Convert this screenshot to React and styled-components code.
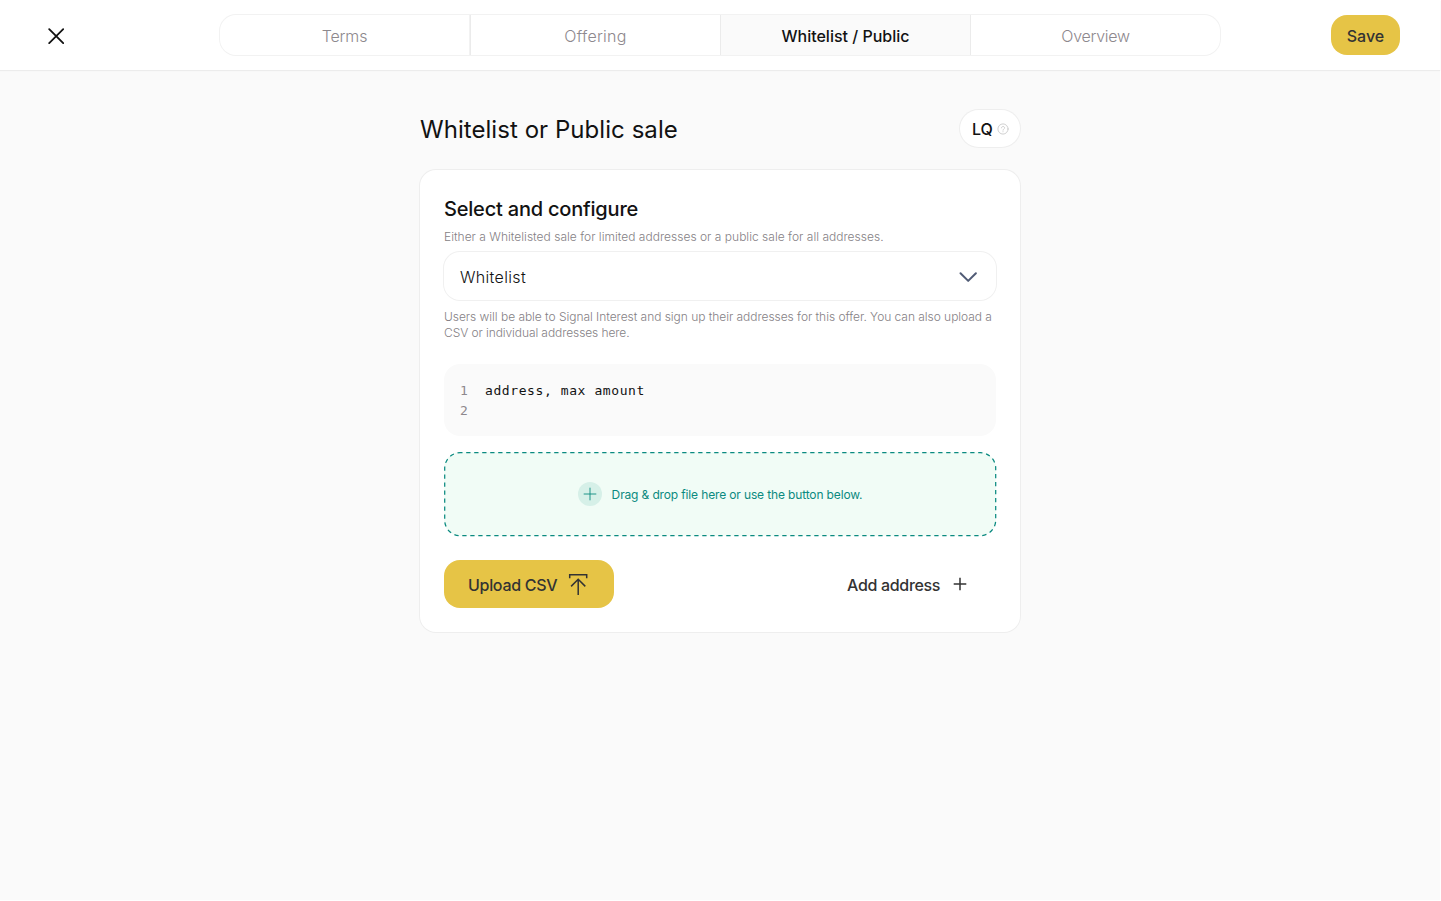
import React from "react";
import styled, { createGlobalStyle } from "styled-components";

const Global = createGlobalStyle`
  * { box-sizing: border-box; }
  body { margin: 0; background: #fff; font-family: Inter, "Liberation Sans", sans-serif; color: #121212; }
  button { font: inherit; color: inherit; border: 0; background: none; padding: 0; }
  svg { display: block; flex: none; }
`;

const Page = styled.div`
  width: 1440px;
  height: 900px;
  background: #fafafa;
`;

const Header = styled.header`
  height: 70px;
  padding: 0 40px;
  display: flex;
  align-items: center;
  justify-content: space-between;
  background: #fff;
  box-shadow: 0 1px 1px #ececec;
`;

const HeaderSide = styled.div`
  width: 180px;
  display: flex;
  justify-content: ${(p) => (p.$end ? "flex-end" : "flex-start")};
`;

const IconButton = styled.button`
  width: 32px;
  height: 32px;
  padding-top: 1px;
  display: flex;
  align-items: center;
  justify-content: center;
`;

const Tabs = styled.nav`
  display: flex;
  width: 1000px;
  height: 40px;
  border-radius: 16px;
  box-shadow: 0 0 0 1px #f2f2f2;
`;

const Tab = styled.a`
  flex: 1;
  display: flex;
  align-items: center;
  justify-content: center;
  padding-top: 1px;
  font-size: 16px;
  font-weight: ${(p) => (p.$active ? 500 : 300)};
  color: ${(p) => (p.$active ? "#121212" : "#8d888d")};
  background: ${(p) => (p.$active ? "#fafafa" : "transparent")};
  & + & { border-left: 1px solid #ebebeb; }
  &:first-child { border-right: 1px solid #f2f2f2; }
`;

const Label = styled.span`
  letter-spacing: ${(p) => p.$track || 0}px;
`;

const SaveButton = styled.button`
  width: 69px;
  height: 40px;
  padding-top: 1px;
  border-radius: 16px;
  background: #e6c446;
  color: #333;
  font-size: 16px;
  font-weight: 500;
`;

const Main = styled.main`
  width: 600px;
  margin: 0 auto;
  padding-top: 40px;
`;

const TitleRow = styled.div`
  height: 37px;
  display: flex;
  align-items: center;
  justify-content: space-between;
`;

const Title = styled.h1`
  margin: 0;
  padding-top: 1px;
  font-size: 24px;
  font-weight: 400;
`;

const Pill = styled.div`
  width: 60px;
  height: 37px;
  padding: 0 11px 0 12px;
  border-radius: 19px;
  display: flex;
  align-items: center;
  justify-content: space-between;
  background: #fff;
  box-shadow: 0 0 0 1px #eee;
  font-size: 16px;
  font-weight: 500;
`;

const Card = styled.section`
  margin-top: 23px;
  height: 462px;
  padding: 24px;
  border-radius: 16px;
  background: #fff;
  box-shadow: 0 0 0 1px #eeeeee;
`;

const Heading = styled.h2`
  margin: 0;
  line-height: 30px;
  font-size: 20px;
  font-weight: 500;
`;

const Hint = styled.p`
  margin: 0;
  padding-top: ${(p) => p.$top}px;
  font-size: 12px;
  font-weight: 300;
  line-height: 16px;
  color: #857f85;
  white-space: nowrap;
`;

const Select = styled.div`
  margin-top: 7px;
  height: 48px;
  padding: 2px 18px 0 16px;
  border-radius: 16px;
  box-shadow: 0 0 0 1px #f0f0f0;
  display: flex;
  align-items: center;
  justify-content: space-between;
  font-size: 16px;
  font-weight: 300;
`;

const Code = styled.div`
  margin-top: 23px;
  height: 72px;
  padding: 17px 16px;
  border-radius: 16px;
  background: #fafafa;
  font-family: "DejaVu Sans Mono", monospace;
  font-size: 13px;
  letter-spacing: 0.59px;
  line-height: 20px;
`;

const CodeLine = styled.div`
  display: flex;
  height: 20px;
`;

const LineNumber = styled.span`
  width: 25px;
  color: #8d888d;
`;

const DropZone = styled.div`
  position: relative;
  margin-top: 16px;
  height: 84px;
  border-radius: 16px;
  background: #f1fcf6;
  display: flex;
  align-items: center;
  justify-content: center;
  gap: 10px;
  color: #0b8a80;
  font-size: 12px;
`;

const DashedOutline = styled.svg`
  position: absolute;
  inset: 0;
  width: 100%;
  height: 100%;
  overflow: visible;
`;

const PlusBadge = styled.span`
  width: 24px;
  height: 24px;
  border-radius: 50%;
  background: #d6f0e8;
  display: flex;
  align-items: center;
  justify-content: center;
`;

const Actions = styled.div`
  margin-top: 24px;
  padding-right: 5px;
  display: flex;
  justify-content: space-between;
`;

const ActionButton = styled.button`
  height: 48px;
  padding: 1px 24px 0;
  border-radius: 16px;
  display: flex;
  align-items: center;
  justify-content: space-between;
  width: ${(p) => p.$width}px;
  background: ${(p) => (p.$primary ? "#e6c446" : "transparent")};
  color: #333;
  font-size: 16px;
  font-weight: 500;
  svg { margin-bottom: 2px; }
`;

const Close = () => (
  <svg width="16" height="16" viewBox="0 0 16 16" fill="none" stroke="#121212" strokeWidth="1.8" strokeLinecap="round">
    <path d="M1.200 1.200l14 14M15.200 1.200L1.200 15.200" />
  </svg>
);

const Chevron = () => (
  <svg width="20" height="12" viewBox="0 0 20 12" fill="none" stroke="#505b75" strokeWidth="2" strokeLinecap="round" strokeLinejoin="round">
    <path d="M2.500 2.200l7.700 7.700 7.700-7.700" />
  </svg>
);

const Help = () => (
  <svg width="12" height="12" viewBox="0 0 12 12" fill="none" stroke="#c4c4c4" strokeWidth="0.8" strokeLinecap="round">
    <circle cx="6" cy="6" r="5.100" />
    <path d="M4.400 4.900c0-2 3.200-2 3.200 0C7.600 6 6 6 6 7.200M6 8.700v.1" />
  </svg>
);

const Plus = ({ size, width }) => (
  <svg width={size} height={size} viewBox="0 0 14 14" fill="none" stroke="currentColor" strokeWidth={width}>
    <path d="M7 .7v12.600M.7 7h12.600" />
  </svg>
);

const Upload = () => (
  <svg width="24" height="24" viewBox="0 0 24 24" fill="none" stroke="#333" strokeWidth="1.500">
    <path d="M3.700 6.200V2.700h17V6.200M12.200 7.300V23M5.100 14.400l7.100-7.100 7.100 7.100" />
  </svg>
);

export default function App() {
  return (
    <Page>
      <Global />
      <Header>
        <HeaderSide><IconButton aria-label="Close"><Close /></IconButton></HeaderSide>
        <Tabs>
          <Tab><Label $track={-0.15}>Terms</Label></Tab>
          <Tab><Label $track={0.25}>Offering</Label></Tab>
          <Tab $active><Label>Whitelist / Public</Label></Tab>
          <Tab><Label $track={-0.3}>Overview</Label></Tab>
        </Tabs>
        <HeaderSide $end><SaveButton>Save</SaveButton></HeaderSide>
      </Header>
      <Main>
        <TitleRow>
          <Title><Label $track={0.05}>Whitelist or Public sale</Label></Title>
          <Pill><Label>LQ</Label><Help /></Pill>
        </TitleRow>
        <Card>
          <Heading><Label $track={-0.2}>Select and configure</Label></Heading>
          <Hint $top={5}><Label $track={0.012}>Either a Whitelisted sale for limited addresses or a public sale for all addresses.</Label></Hint>
          <Select><Label $track={0.33}>Whitelist</Label><Chevron /></Select>
          <Hint $top={9}>
            <Label $track={-0.042}>Users will be able to Signal Interest and sign up their addresses for this offer. You can also upload a</Label>
            <br />
            <Label $track={-0.09}>CSV or individual addresses here.</Label>
          </Hint>
          <Code>
            <CodeLine><LineNumber>1</LineNumber>address, max amount</CodeLine>
            <CodeLine><LineNumber>2</LineNumber></CodeLine>
          </Code>
          <DropZone>
            <DashedOutline fill="none" stroke="#0b8a80" strokeWidth="1.250" strokeDasharray="4.300 3.700" strokeDashoffset="2">
              <rect x="0.700" y="0.700" width="551" height="83" rx="15.500" />
            </DashedOutline>
            <PlusBadge><Plus size={14} width={0.9} /></PlusBadge>
            <Label $track={-0.14}>Drag &amp; drop file here or use the button below.</Label>
          </DropZone>
          <Actions>
            <ActionButton $primary $width={170}><Label $track={-0.3}>Upload CSV</Label><Upload /></ActionButton>
            <ActionButton $width={168}><Label $track={-0.32}>Add address</Label><Plus size={14} width={1.5} /></ActionButton>
          </Actions>
        </Card>
      </Main>
    </Page>
  );
}
